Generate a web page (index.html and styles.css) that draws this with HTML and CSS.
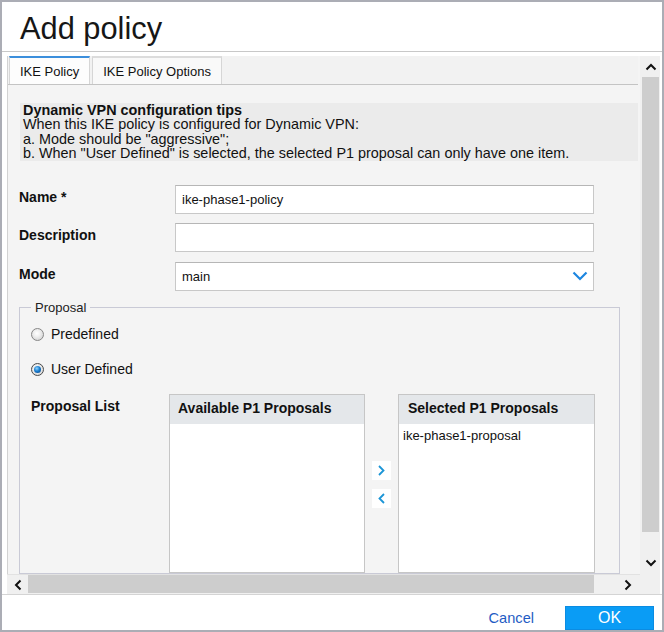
FILE: index.html
```html
<!DOCTYPE html>
<html>
<head>
<meta charset="utf-8">
<title>Add policy</title>
<link rel="stylesheet" href="styles.css">
</head>
<body>
<div class="window">
  <div class="title">Add policy</div>
  <div class="main">
    <div class="viewport">
      <div class="tabs">
        <div class="tab active">IKE Policy</div>
        <div class="tab">IKE Policy Options</div>
      </div>
      <div class="panel">
        <div class="tips">
          <div class="tips-title">Dynamic VPN configuration tips</div>
          <div>When this IKE policy is configured for Dynamic VPN:</div>
          <div>a. Mode should be "aggressive";</div>
          <div>b. When "User Defined" is selected, the selected P1 proposal can only have one item.</div>
        </div>
        <div class="form">
          <div class="row">
            <div class="label">Name *</div>
            <div class="input">ike-phase1-policy</div>
          </div>
          <div class="row">
            <div class="label">Description</div>
            <div class="input"></div>
          </div>
          <div class="row">
            <div class="label">Mode</div>
            <div class="input select">
              <span>main</span>
              <svg class="chev" width="16" height="10" viewBox="0 0 16 10"><polyline points="1.5,1.5 8,8 14.5,1.5" fill="none" stroke="#1c86e0" stroke-width="2.2"/></svg>
            </div>
          </div>
        </div>
        <fieldset class="proposal">
          <legend>Proposal</legend>
          <div class="radio-row first"><span class="radio"></span>Predefined</div>
          <div class="radio-row"><span class="radio checked"><span class="dot"></span></span>User Defined</div>
          <div class="list-row">
            <div class="list-label">Proposal List</div>
            <div class="list available">
              <div class="list-head">Available P1 Proposals</div>
              <div class="list-body"></div>
            </div>
            <div class="movers">
              <div class="mover"><svg width="19" height="19" viewBox="0 0 19 19"><polyline points="7,5 11.5,9.5 7,14" fill="none" stroke="#1b95d6" stroke-width="1.8"/></svg></div>
              <div class="mover"><svg width="19" height="19" viewBox="0 0 19 19"><polyline points="12,5 7.5,9.5 12,14" fill="none" stroke="#1b95d6" stroke-width="1.8"/></svg></div>
            </div>
            <div class="list selected">
              <div class="list-head">Selected P1 Proposals</div>
              <div class="list-body"><div class="list-item">ike-phase1-proposal</div></div>
            </div>
          </div>
        </fieldset>
      </div>
    </div>
    <div class="vscroll">
      <div class="vs-btn"><svg width="12" height="8" viewBox="0 0 12 8"><polyline points="1.5,6.5 6,2 10.5,6.5" fill="none" stroke="#111" stroke-width="2"/></svg></div>
      <div class="vs-thumb"></div>
      <div class="vs-rest"><svg width="12" height="8" viewBox="0 0 12 8"><polyline points="1.5,1.5 6,6 10.5,1.5" fill="none" stroke="#111" stroke-width="2"/></svg></div>
    </div>
    <div class="hscroll">
      <div class="hs-btn"><svg width="8" height="12" viewBox="0 0 8 12"><polyline points="6.5,1.5 2,6 6.5,10.5" fill="none" stroke="#111" stroke-width="2"/></svg></div>
      <div class="hs-thumb"></div>
      <div class="hs-rest"><svg width="8" height="12" viewBox="0 0 8 12"><polyline points="1.5,1.5 6,6 1.5,10.5" fill="none" stroke="#111" stroke-width="2"/></svg></div>
    </div>
  </div>
  <div class="footer">
    <span class="cancel">Cancel</span>
    <button class="ok">OK</button>
  </div>
</div>
</body>
</html>
```
FILE: styles.css
```css
* { box-sizing: border-box; }
body {
  margin: 0;
  font-family: "Liberation Sans", Arial, sans-serif;
  color: #111;
  background: #fff;
}
.window {
  width: 664px;
  height: 632px;
  border: 2px solid #abadb5;
  display: flex;
  flex-direction: column;
  background: #fff;
  overflow: hidden;
}
.title {
  height: 50px;
  flex: none;
  border-bottom: 1px solid #c8c8c8;
  padding: 10px 0 0 18px;
  font-size: 30.8px;
  line-height: 34px;
  color: #161616;
}
.main {
  flex: none;
  display: grid;
  grid-template-columns: 633px 20px;
  grid-template-rows: 518px 20px;
  padding: 4px 2px 0 5px;
}
.viewport {
  grid-row: 1;
  grid-column: 1;
  background: #f4f4f4;
  border-left: 1px solid #d2d2d2;
  overflow: hidden;
}
.tabs {
  display: flex;
  height: 29px;
  border-bottom: 1px solid #c4c4c4;
  padding-left: 1px;
  margin-right: 2px;
  background: #f2f2f2;
}
.tab {
  height: 28px;
  border: 1px solid #d6d6d6;
  border-top: 2px solid #dcdcdc;
  border-bottom: none;
  background: #f9f9f9;
  font-size: 13px;
  line-height: 25px;
  padding: 1px 10px 0 10px;
  margin-right: 2px;
}
.tab.active {
  border-top-color: #3c8fdc;
  background: #fdfdfd;
}
.panel {
  padding: 18px 2px 0 11px;
}
.tips {
  margin-left: 1px;
  background: #ebebeb;
  font-size: 14.4px;
  line-height: 14.4px;
  padding: 0 3px;
  height: 58px;
}
.tips-title {
  font-weight: bold;
}
.form {
  margin-top: 23.5px;
}
.row {
  display: flex;
  height: 29px;
  margin-bottom: 9.5px;
}
.row:last-child { margin-bottom: 0; }
.label {
  width: 156px;
  font-weight: bold;
  font-size: 14px;
  line-height: 16px;
  padding-top: 4px;
}
.input {
  width: 419px;
  height: 29px;
  border: 1px solid #c8c8c8;
  border-top-color: #b6b6b6;
  background: #fff;
  font-size: 13px;
  line-height: 27px;
  padding: 0 6px;
}
.select {
  display: flex;
  justify-content: space-between;
  align-items: center;
}
.chev { margin-right: -1px; }
.proposal {
  margin: 9.5px 0 0 0;
  width: 601px;
  padding: 0 0 0 11px;
  border: 1px solid #c9cad6;
  min-width: 0;
}
.proposal legend {
  padding: 0 4px;
  font-size: 13px;
  line-height: 15px;
  color: #222;
}
.radio-row {
  display: flex;
  align-items: center;
  height: 20px;
  font-size: 14px;
  margin-top: 15px;
}
.radio-row.first { margin-top: 9px; }
.radio {
  width: 13px;
  height: 13px;
  border-radius: 50%;
  border: 1px solid #878787;
  background: radial-gradient(circle at 45% 40%, #ffffff 0, #f0f0f0 35%, #c9c9c9 100%);
  margin-right: 7px;
  display: flex;
  align-items: center;
  justify-content: center;
}
.radio.checked { border-color: #4a4a4a; }
.dot {
  width: 7px;
  height: 7px;
  border-radius: 50%;
  background: radial-gradient(circle at 40% 35%, #8fd3ff 0, #1a7fd0 45%, #0a3f80 100%);
}
.list-row {
  display: flex;
  margin-top: 15px;
}
.list-label {
  width: 138px;
  font-weight: bold;
  font-size: 14px;
  line-height: 16px;
  padding-top: 4px;
}
.list {
  width: 196px;
  height: 179px;
  border: 1px solid #c6c6c6;
  background: #fff;
  display: flex;
  flex-direction: column;
}
.list.selected { width: 197px; }
.list-head {
  height: 29px;
  background: #e4e7ea;
  font-weight: bold;
  font-size: 14px;
  line-height: 26px;
  padding-left: 8px;
}
.list.selected .list-head { padding-left: 9px; }
.list-item {
  font-size: 13px;
  line-height: 15px;
  padding: 4px 4px;
}
.movers {
  width: 33px;
  padding: 67px 0 0 7px;
}
.mover {
  width: 19px;
  height: 19px;
  background: #fff;
  margin-bottom: 9px;
}
.mover svg { display: block; }
.vscroll {
  grid-row: 1 / 3;
  grid-column: 2;
  background: #f0f0f0;
  display: flex;
  flex-direction: column;
  padding: 0 1px 0 2px;
}
.vs-btn {
  height: 21px;
  display: flex;
  align-items: center;
  justify-content: center;
}
.vs-thumb {
  height: 455px;
  background: #cdcdcd;
}
.vs-rest {
  flex: 1;
  display: flex;
  align-items: center;
  justify-content: center;
}
.hscroll {
  grid-row: 2;
  grid-column: 1;
  background: #f0f0f0;
  display: flex;
  border-top: 1px solid #e2e2e2;
}
.hs-btn {
  width: 21px;
  display: flex;
  align-items: center;
  justify-content: center;
}
.hs-thumb {
  width: 566px;
  background: #cdcdcd;
  margin: 0 0 1px 0;
}
.hs-rest {
  flex: 1;
  display: flex;
  align-items: center;
  justify-content: flex-end;
  padding-right: 8px;
}
.footer {
  flex: 1;
  border-top: 1px solid #d4d4d4;
  display: flex;
  justify-content: flex-end;
  align-items: flex-end;
  padding-right: 8px;
}
.cancel {
  color: #1f5cc4;
  font-size: 14.6px;
  line-height: 24px;
  margin-right: 31px;
}
.ok {
  width: 89px;
  height: 24px;
  background: #0a9cf5;
  border: 1px solid #0b8ce2;
  color: #fff;
  font-family: inherit;
  font-size: 16px;
  padding: 0;
}
```
